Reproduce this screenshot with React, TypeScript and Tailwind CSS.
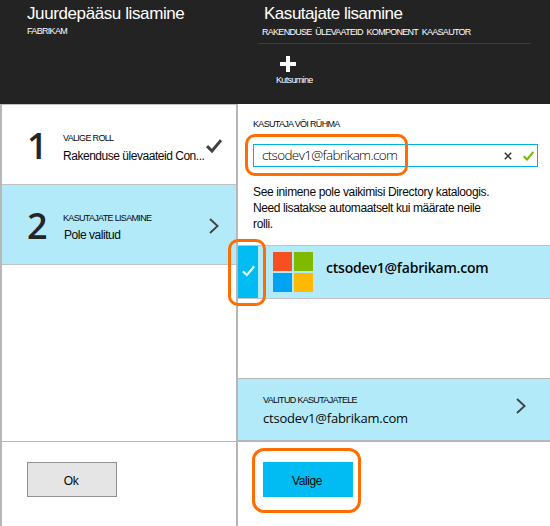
import React from "react";

const Check = ({ className, width = 3 }: { className: string; width?: number }) => (
  <svg viewBox="0 0 16 14" className={className} fill="none" stroke="currentColor" strokeWidth={width}>
    <path d="M1 7.2 L6 12 L15 1.2" />
  </svg>
);

const Chevron = ({ className }: { className: string }) => (
  <svg viewBox="0 0 10 16" className={className} fill="none" stroke="#404040" strokeWidth="1.8">
    <path d="M1 1 L8.6 8 L1 15" />
  </svg>
);

const Ring = ({ className }: { className: string }) => (
  <div className={`pointer-events-none absolute z-10 border-3 border-[#ff6c00] ${className}`} />
);

function Step({ n, label, value, active, children, valueClass }: {
  n: string; label: string; value: string; active?: boolean; children: React.ReactNode; valueClass: string;
}) {
  return (
    <div className={`flex h-20 border-b border-[#c2c2c2] ${active ? "bg-[#b2eafa]" : "bg-white"}`}>
      <div className="w-[61px] shrink-0 pt-[21px] pl-[25px] font-['Open_Sans','Noto_Sans',sans-serif] text-[36px] leading-[40px] font-semibold text-[#252525]">{n}</div>
      <div className="w-[143px] shrink-0 pt-[27px] whitespace-nowrap">
        <div className="text-[9px] leading-[12px] tracking-[-0.68px]">{label}</div>
        <div className={`text-[12px] leading-[16px] tracking-[-0.47px] ${valueClass}`}>{value}</div>
      </div>
      {children}
    </div>
  );
}

export default function App() {
  return (
    <div className="flex h-[526px] w-[550px] overflow-hidden bg-white font-['Liberation_Sans',Arial,sans-serif] text-[#080808]">
      <section className="flex w-[238px] shrink-0 flex-col">
        <header className="h-[104px] bg-[#232323] pt-[4px] pl-[27px] whitespace-nowrap text-white">
          <h1 className="text-[17px] leading-[20px] tracking-[-0.4px]">Juurdepääsu lisamine</h1>
          <p className="mt-[1px] text-[9px] leading-[12px] tracking-[-0.68px]">FABRIKAM</p>
        </header>
        <div className="flex flex-1 flex-col border-x-2 border-[#b7b7b7]">
          <div className="h-px bg-[#c2c2c2]" />
          <Step n="1" label="VALIGE ROLL" value="Rakenduse ülevaateid Con..." valueClass="pt-[4px]">
            <Check className="mt-[34px] h-[14px] w-[16px] shrink-0 text-[#404040]" />
          </Step>
          <Step n="2" label="KASUTAJATE LISAMINE" value="Pole valitud" active valueClass="pt-[3px] pl-px">
            <Chevron className="mt-[33px] ml-[3px] h-[16px] w-[10px] shrink-0" />
          </Step>
          <div className="flex-1" />
          <footer className="h-[85px] border-t border-[#b7b7b7] pt-[20px] pl-[25px]">
            <button className="block h-[35px] w-[90px] border border-[#929292] bg-[#e5e5e5] pt-[3px] pr-[2px] text-[12px] tracking-[-0.4px]">Ok</button>
          </footer>
        </div>
      </section>

      <section className="flex flex-1 flex-col">
        <header className="h-[104px] bg-[#232323] pt-[4px] pl-[20px] whitespace-nowrap text-white">
          <h1 className="pl-[6px] text-[17px] leading-[20px] tracking-[-0.47px]">Kasutajate lisamine</h1>
          <p className="mt-[2px] pl-[4px] text-[9px] leading-[12px] tracking-[-0.72px] [word-spacing:2px]">RAKENDUSE ÜLEVAATEID KOMPONENT KAASAUTOR</p>
          <div className="mt-[5px] h-px w-[273px] bg-[#3d3d3d]" />
          <svg viewBox="0 0 16 16" className="mt-[12px] ml-[22px] size-[16px]"><path fill="white" d="M6 0h4v6h6v4h-6v6H6v-6H0V6h6z" /></svg>
          <p className="mt-[2px] pl-[18px] text-[9px] leading-[12px] tracking-[-0.65px]">Kutsumine</p>
        </header>
        <div className="flex flex-1 flex-col">
          <div className="h-[141px] pt-[14px] pl-[15px]">
            <label className="block text-[9px] leading-[12px] tracking-[-0.68px]">KASUTAJA VÕI RÜHMA</label>
            <div className="relative mt-[14px] flex h-[23px] w-[285px] items-center border border-[#00b0e8] pl-[8px]">
              <span className="w-[242px] pb-px font-['Open_Sans','Noto_Sans',sans-serif] text-[13.5px] font-light tracking-[-0.66px] text-black">ctsodev1@fabrikam.com</span>
              <svg viewBox="0 0 8 8" className="mr-[11px] size-[8px] shrink-0" fill="none" stroke="#303030" strokeWidth="1.5"><path d="M.8.8l6.4 6.4M7.2.8L.8 7.2" /></svg>
              <Check className="h-[10px] w-[11px] shrink-0 text-[#76b900]" />
              <Ring className="-top-[11px] -left-[9px] h-[42px] w-[163px] rounded-[10px]" />
            </div>
            <p className="mt-[17px] text-[12px] leading-[16px] tracking-[-0.36px] whitespace-nowrap">See inimene pole vaikimisi Directory kataloogis.<br /><span className="tracking-[-0.4px]">Need lisatakse automaatselt kui määrate neile</span><br />rolli.</p>
          </div>
          <div className="relative flex h-[54px] border-y border-[#c2c2c2] bg-[#b2eafa]">
            <div className="w-[20px] bg-[#00bcf2] pt-[19px] pl-[4px] text-white"><Check className="h-[12px] w-[13px]" width={2.6} /></div>
            <div className="mt-[6px] ml-[15px] grid size-[40px] grid-cols-2 gap-[2px]">
              <i className="bg-[#f65022]" /><i className="bg-[#7fba00]" /><i className="bg-[#00a3f2]" /><i className="bg-[#ffb900]" />
            </div>
            <span className="mt-[12px] ml-[13px] font-['Open_Sans','Noto_Sans',sans-serif] text-[14px] leading-[20px] font-semibold tracking-[-0.2px]">ctsodev1@fabrikam.com</span>
            <Ring className="-top-[7px] -left-[10px] h-[67px] w-[38px] rounded-[10px]" />
          </div>
          <div className="flex-1" />
          <div className="flex h-[64px] border-t border-b-2 border-[#b7b7b7] bg-[#b2eafa] pl-[25px]">
            <div className="w-[253px] pt-[15px]">
              <p className="text-[9px] leading-[12px] tracking-[-0.68px]">VALITUD KASUTAJATELE</p>
              <p className="pt-px font-['Open_Sans','Noto_Sans',sans-serif] text-[13px] leading-[22px] tracking-[-0.22px]">ctsodev1@fabrikam.com</p>
            </div>
            <Chevron className="mt-[19px] h-[16px] w-[10px]" />
          </div>
          <footer className="h-[84px] pt-[20px] pl-[25px]">
            <div className="relative h-[35px] w-[90px]">
              <button className="block h-full w-full bg-[#00bcf2] pt-[3px] pr-[2px] text-[12px] tracking-[-0.4px]">Valige</button>
              <Ring className="-top-[14px] -left-[11px] h-[65px] w-[109px] rounded-[12px]" />
            </div>
          </footer>
        </div>
      </section>
    </div>
  );
}
